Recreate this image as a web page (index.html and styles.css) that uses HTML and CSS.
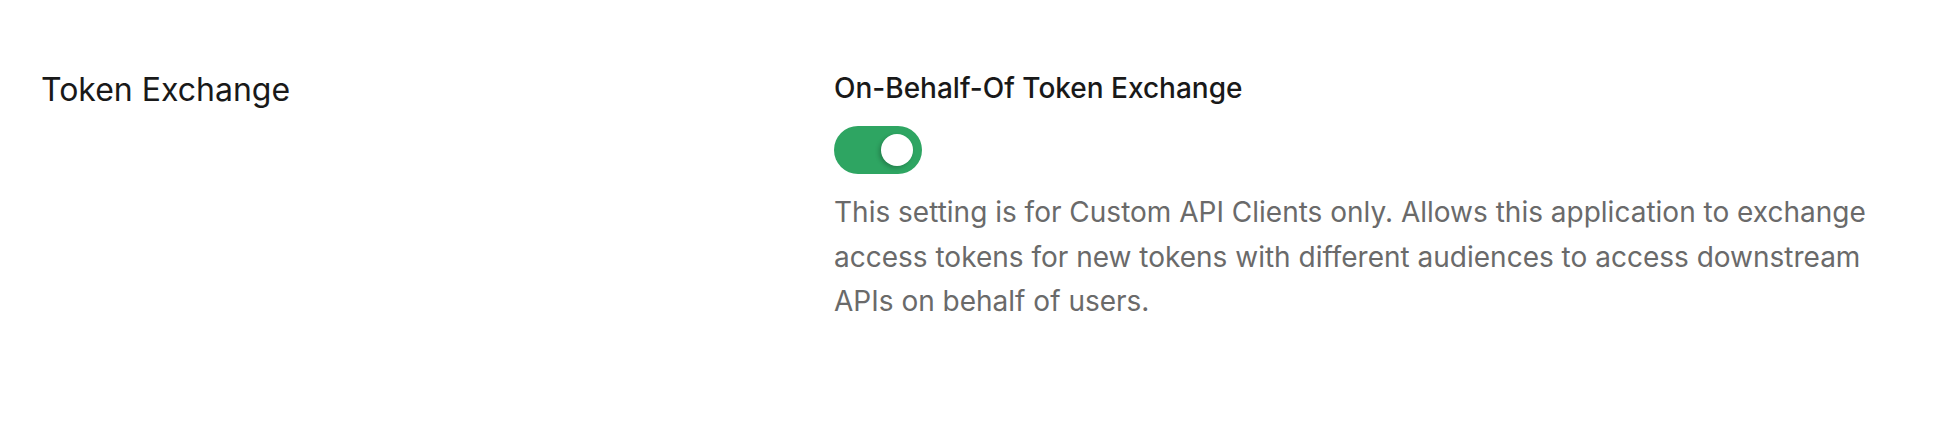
FILE: index.html
```html
<!DOCTYPE html>
<html lang="en">
<head>
<meta charset="utf-8">
<title>Token Exchange</title>
<link rel="stylesheet" href="styles.css">
</head>
<body>
<section class="settings-row">
  <div class="settings-label">
    <h2 class="section-title">Token Exchange</h2>
  </div>
  <div class="settings-body">
    <div class="field-label">On-Behalf-Of Token Exchange</div>
    <button class="toggle is-on" type="button" role="switch" aria-checked="true">
      <span class="toggle-knob"></span>
    </button>
    <p class="field-help">This setting is for Custom API Clients only. Allows this application to exchange access tokens for new tokens with different audiences to access downstream APIs on behalf of users.</p>
  </div>
</section>
</body>
</html>
```
FILE: styles.css
```css
* { box-sizing: border-box; }
html, body {
  margin: 0;
  padding: 0;
  background: #ffffff;
  height: 100%;
}
body {
  font-family: Inter, "Noto Sans", sans-serif;
  color: #1e1e1e;
}
.settings-row {
  display: flex;
  padding: 70px 0 0 41px;
}
.settings-label {
  width: 793px;
  flex: none;
}
.section-title {
  margin: 0;
  font-size: 32px;
  font-weight: 400;
  line-height: 40px;
  color: #191919;
}
.settings-body {
  width: 1060px;
}
.field-label {
  font-size: 28px;
  font-weight: 500;
  line-height: 36px;
  color: #191919;
}
.toggle {
  display: flex;
  align-items: center;
  justify-content: flex-end;
  width: 88px;
  height: 48px;
  margin-top: 20px;
  padding: 0 9px;
  border: 0;
  border-radius: 24px;
  background: #2ea562;
  cursor: pointer;
}
.toggle-knob {
  width: 32px;
  height: 32px;
  border-radius: 50%;
  background: #ffffff;
  box-shadow: -2px 2px 4px rgba(0, 0, 0, 0.22);
}
.field-help {
  margin: 16px 0 0;
  font-size: 28px;
  line-height: 44.5px;
  color: #6a6a6a;
}
```
